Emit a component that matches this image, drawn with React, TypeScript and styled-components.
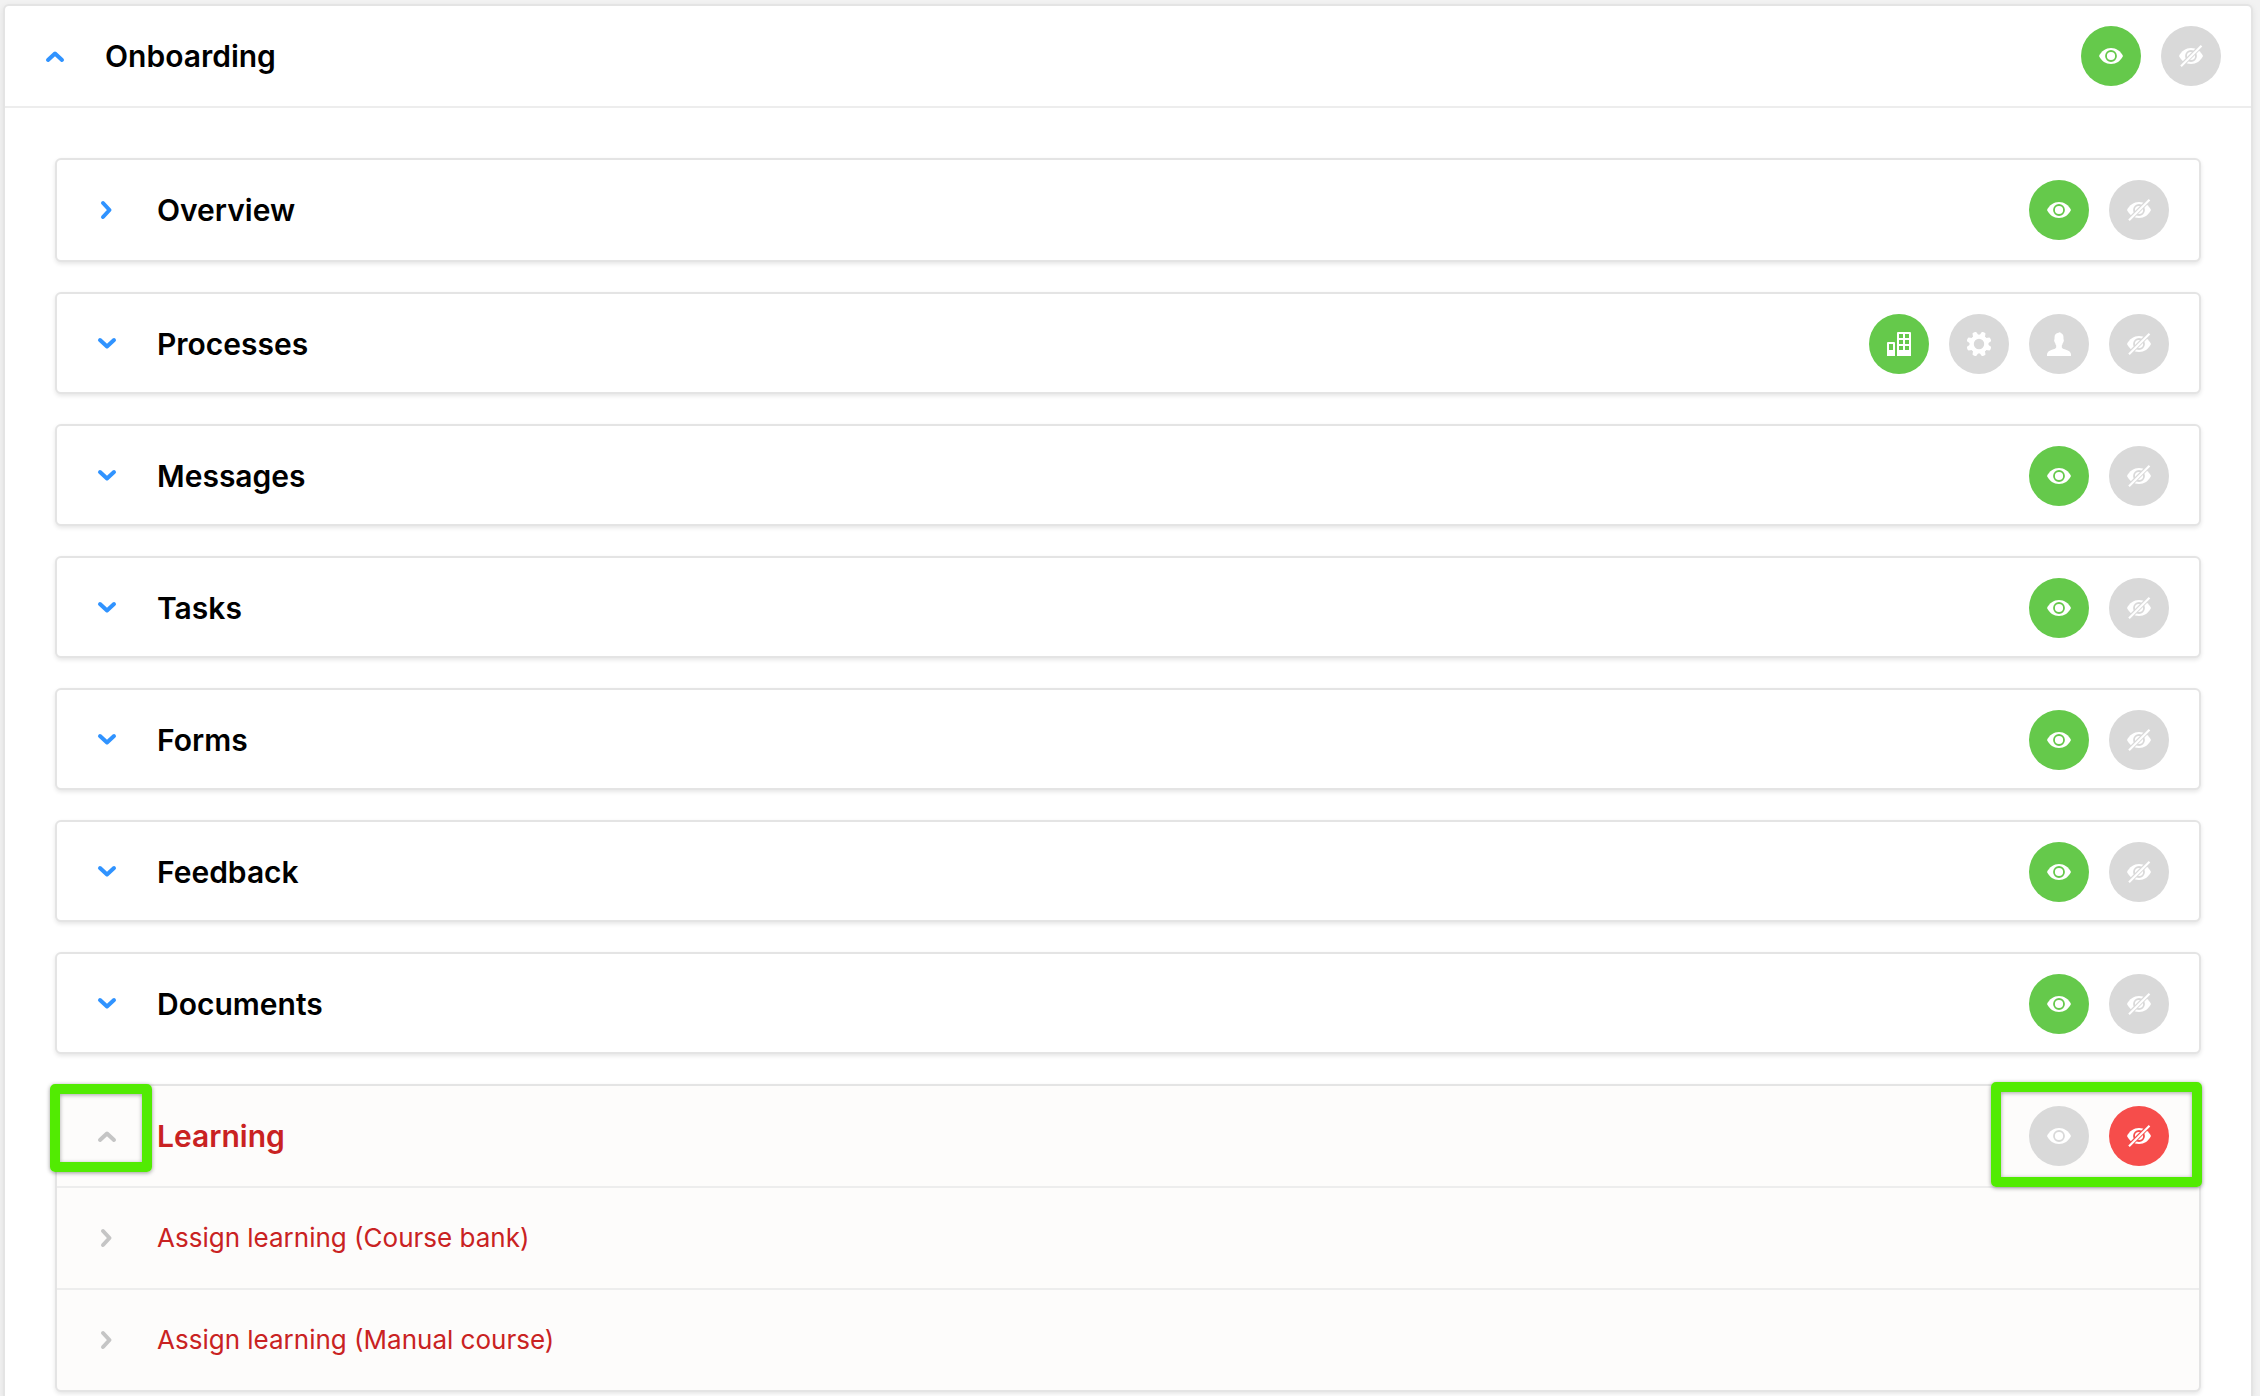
import React, { useState } from "react";
import styled, { createGlobalStyle } from "styled-components";

const color = {
  page: "#f2f2f2",
  edge: "#e4e4e4",
  line: "#ededed",
  tinted: "#fdfcfb",
  blue: "#3093ff",
  muted: "#c5c5c5",
  red: "#c92222",
  green: "#65c94b",
  danger: "#f64d4b",
  idle: "#d9d9d9",
  highlight: "#52eb02",
};

const GlobalStyle = createGlobalStyle`
  *, *::before, *::after { box-sizing: border-box; }
  body {
    margin: 0;
    background: ${color.page};
    font-family: Inter, "Liberation Sans", sans-serif;
    color: #000;
  }
  h2, h3, p, ul { margin: 0; padding: 0; }
  button { margin: 0; padding: 0; border: 0; background: none; font: inherit; cursor: pointer; }
`;

const Page = styled.main`
  padding: 4px 7px 0 3px;
`;

const Panel = styled.section`
  border: 2px solid ${color.edge};
  border-bottom: 0;
  border-radius: 6px 6px 0 0;
  background: #fff;
  box-shadow: 0 2px 6px rgba(0, 0, 0, 0.08);
`;

const PanelHeader = styled.header`
  display: flex;
  padding-right: 30px;
  border-bottom: 2px solid ${color.line};
`;

const PanelBody = styled.div`
  display: flex;
  flex-direction: column;
  gap: 30px;
  padding: 50px 50px 4px;
`;

const Card = styled.section<{ $tinted?: boolean }>`
  border: 2px solid ${color.edge};
  border-radius: 6px;
  background: ${(p) => (p.$tinted ? color.tinted : "#fff")};
  box-shadow: 0 2px 4px rgba(0, 0, 0, 0.1);
`;

const CardHeader = styled.div<{ $tight?: boolean }>`
  display: flex;
  height: ${(p) => (p.$tight ? 98 : 100)}px;
  padding-right: 30px;
`;

const Toggle = styled.button<{ $muted?: boolean }>`
  position: relative;
  display: flex;
  flex: none;
  align-items: center;
  justify-content: center;
  width: 100px;
  height: 100px;
  color: ${(p) => (p.$muted ? color.muted : color.blue)};
`;

const Title = styled.h3<{ $off?: boolean }>`
  flex: 1;
  font-size: 30px;
  font-weight: 600;
  line-height: 100px;
  color: ${(p) => (p.$off ? color.red : "#000")};
`;

const Actions = styled.div`
  position: relative;
  display: flex;
  align-items: center;
  gap: 20px;
  height: 100px;
`;

const RoundButton = styled.button<{ $bg: string }>`
  display: flex;
  align-items: center;
  justify-content: center;
  width: 60px;
  height: 60px;
  border-radius: 50%;
  background: ${(p) => p.$bg};
  color: #fff;
`;

const SubList = styled.ul`
  list-style: none;
`;

const SubRow = styled.li`
  display: flex;
  border-top: 2px solid ${color.line};
`;

const SubTitle = styled.p`
  font-size: 26px;
  line-height: 100px;
  color: ${color.red};
`;

const Highlight = styled.span`
  position: absolute;
  border: 10px solid ${color.highlight};
  border-radius: 5px;
  box-shadow: 0 1px 4px rgba(0, 0, 0, 0.4), inset 0 1px 4px rgba(0, 0, 0, 0.35);
  pointer-events: none;
`;

const ToggleHighlight = styled(Highlight)`
  inset: -2px 5px 14px -7px;
`;

const ActionsHighlight = styled(Highlight)`
  inset: -4px -33px -1px -38px;
`;

type Direction = "up" | "down" | "right";

function Chevron({ direction }: { direction: Direction }) {
  const d = {
    up: "M2 13l7-6.500 7 6.500",
    down: "M2 5l7 6.500L16 5",
    right: "M5 2l6.500 7L5 16",
  }[direction];
  return (
    <svg width="18" height="18" viewBox="0 0 18 18" fill="none" stroke="currentColor" strokeWidth="4" strokeLinecap="round" strokeLinejoin="round" aria-hidden="true" overflow="visible">
      <path d={d} />
    </svg>
  );
}

type IconName = "eye" | "eyeOff" | "company" | "gear" | "person";

function Icon({ name, bg }: { name: IconName; bg: string }) {
  return (
    <svg width="24" height="24" viewBox="0 0 24 24" fill="currentColor" aria-hidden="true">
      {(name === "eye" || name === "eyeOff") && (
        <>
          <path d="M0 12C2.4 7 6.8 4 12 4s9.600 3 12 8c-2.400 5-6.800 8-12 8S2.400 17 0 12z" />
          <circle cx="12" cy="12" r="5" fill="none" stroke={bg} strokeWidth="1.8" />
        </>
      )}
      {name === "eyeOff" && (
        <>
          <path d="M2.500 21.500 21.500 2.500" stroke={bg} strokeWidth="4.200" />
          <path d="M2 22.200 22.500 1.700" stroke="currentColor" strokeWidth="2.200" />
        </>
      )}
      {name === "company" && (
        <path fillRule="evenodd" d="M0 24V11q0-1 1-1h6q1 0 1 1v13zM2 12v6h4v-6zM10 24V1q0-1 1-1h12q1 0 1 1v23zM12 2v4h4V2zM18 2v4h4V2zM12 8v4h4V8zM18 8v4h4V8zM12 14v4h4v-4zM18 14v4h4v-4z" />
      )}
      {name === "gear" && (
        <>
          <circle cx="12" cy="12" r="7.400" fill="none" stroke="currentColor" strokeWidth="4.400" />
          {[22.5, 67.5, 112.5, 157.5, 202.5, 247.5, 292.5, 337.5].map((angle) => (
            <path key={angle} transform={`rotate(${angle} 12 12)`} d="M8.800 5 10-.2q2-1 4 0L15.200 5z" />
          ))}
        </>
      )}
      {name === "person" && (
        <path d="M11.500.8 13.200 0l.3 1q3 .6 3 4.500v1.800q.7.500.2 2-.2 1.200-.9 1.700-.3 1.600-1 2.400v2q.6 1.200 3.600 2.100 5.600 1.700 5.600 5V24H0v-1.500q0-3.300 5.600-5 3-.9 3.600-2.100v-2q-.7-.8-1-2.400-.7-.5-.9-1.700-.5-1.500.2-2V5.500Q7.500 1.300 11.500.8z" />
      )}
    </svg>
  );
}

interface Choice {
  icon: IconName;
  label: string;
}

const visibility: Choice[] = [
  { icon: "eye", label: "Visible" },
  { icon: "eyeOff", label: "Hidden" },
];

const scopes: Choice[] = [
  { icon: "company", label: "Company" },
  { icon: "gear", label: "Settings" },
  { icon: "person", label: "Personal" },
  { icon: "eyeOff", label: "Hidden" },
];

interface ActionBarProps {
  name: string;
  choices: Choice[];
  initial?: IconName;
  highlighted?: boolean;
}

function ActionBar({ name, choices, initial, highlighted }: ActionBarProps) {
  const [active, setActive] = useState<IconName>(initial ?? choices[0].icon);
  return (
    <Actions role="group" aria-label={`${name} access`}>
      {choices.map(({ icon, label }) => {
        const on = icon === active;
        const bg = !on ? color.idle : icon === "eyeOff" ? color.danger : color.green;
        return (
          <RoundButton key={icon} type="button" $bg={bg} aria-label={label} aria-pressed={on} onClick={() => setActive(icon)}>
            <Icon name={icon} bg={bg} />
          </RoundButton>
        );
      })}
      {highlighted && <ActionsHighlight />}
    </Actions>
  );
}

interface Item {
  title: string;
  direction: Direction;
  choices: Choice[];
}

const items: Item[] = [
  { title: "Overview", direction: "right", choices: visibility },
  { title: "Processes", direction: "down", choices: scopes },
  { title: "Messages", direction: "down", choices: visibility },
  { title: "Tasks", direction: "down", choices: visibility },
  { title: "Forms", direction: "down", choices: visibility },
  { title: "Feedback", direction: "down", choices: visibility },
  { title: "Documents", direction: "down", choices: visibility },
];

const learningItems = ["Assign learning (Course bank)", "Assign learning (Manual course)"];

export default function App() {
  return (
    <>
      <GlobalStyle />
      <Page>
        <Panel>
          <PanelHeader>
            <Toggle type="button" aria-label="Collapse Onboarding" aria-expanded>
              <Chevron direction="up" />
            </Toggle>
            <Title as="h2">Onboarding</Title>
            <ActionBar name="Onboarding" choices={visibility} />
          </PanelHeader>
          <PanelBody>
            {items.map(({ title, direction, choices }) => (
              <Card key={title}>
                <CardHeader $tight={direction === "down"}>
                  <Toggle type="button" aria-label={`Expand ${title}`} aria-expanded={false}>
                    <Chevron direction={direction} />
                  </Toggle>
                  <Title>{title}</Title>
                  <ActionBar name={title} choices={choices} />
                </CardHeader>
              </Card>
            ))}
            <Card $tinted>
              <CardHeader>
                <Toggle type="button" $muted aria-label="Collapse Learning" aria-expanded>
                  <Chevron direction="up" />
                  <ToggleHighlight />
                </Toggle>
                <Title $off>Learning</Title>
                <ActionBar name="Learning" choices={visibility} initial="eyeOff" highlighted />
              </CardHeader>
              <SubList>
                {learningItems.map((title) => (
                  <SubRow key={title}>
                    <Toggle type="button" $muted aria-label={`Expand ${title}`} aria-expanded={false}>
                      <Chevron direction="right" />
                    </Toggle>
                    <SubTitle>{title}</SubTitle>
                  </SubRow>
                ))}
              </SubList>
            </Card>
          </PanelBody>
        </Panel>
      </Page>
    </>
  );
}
